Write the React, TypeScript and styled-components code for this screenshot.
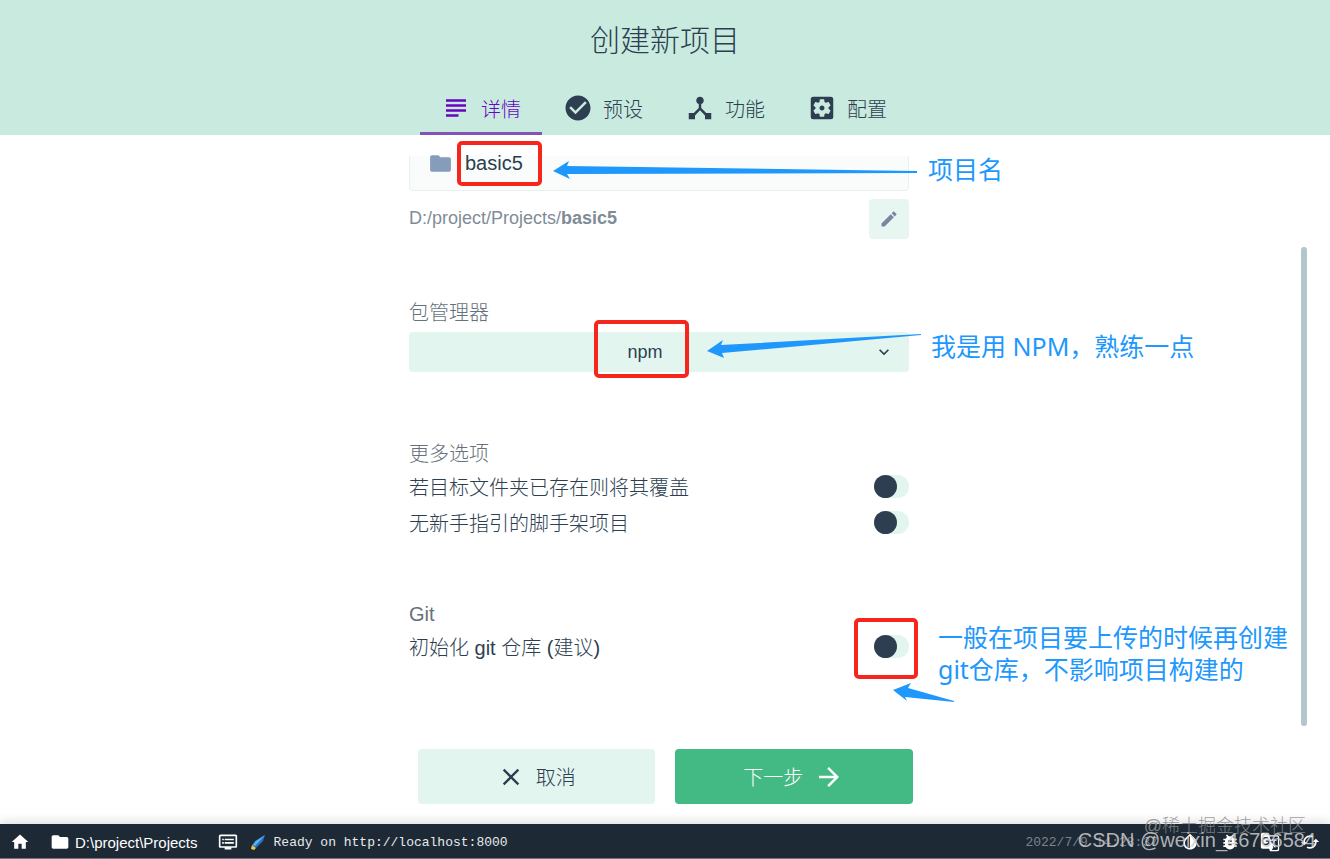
import React from 'react';
import styled, { createGlobalStyle, css } from 'styled-components';
import {
  MdSubject, MdCheckCircle, MdDeviceHub, MdSettingsApplications, MdFolder, MdEdit,
  MdKeyboardArrowDown, MdClose, MdArrowForward, MdHome, MdDvr, MdInvertColors,
  MdBugReport, MdGTranslate, MdCached,
} from 'react-icons/md';

const ink = '#2c3e50';
const blue = '#1e98fd';
const mint = '#e3f5ef';

const Global = createGlobalStyle`
  * { box-sizing: border-box; }
  body { margin: 0; background: #fff; color: ${ink}; }
  body, button, input, select {
    font-family: "Liberation Sans", "Noto Sans CJK SC", sans-serif;
    font-weight: 300;
  }
  button, input, select { color: inherit; border: 0; margin: 0; }
  svg { display: block; flex: none; }
`;

const Page = styled.div`
  min-height: 100vh;
  display: flex;
  flex-direction: column;
`;

const Header = styled.header`
  background: #c9ebdf;
  display: flex;
  flex-direction: column;
  align-items: center;
`;

const Title = styled.h1`
  margin: 0;
  padding-top: 21px;
  height: 81px;
  font-size: 30px;
  line-height: 40px;
  font-weight: 300;
`;

const Tabs = styled.nav`
  display: flex;
  margin-right: 2px;
`;

const Tab = styled.button<{ $active?: boolean }>`
  height: 54px;
  padding: 3px 21px 0;
  display: flex;
  align-items: center;
  gap: 10px;
  font-size: 20px;
  background: none;
  color: ${p => (p.$active ? '#6806c1' : ink)};
  border-bottom: 3px solid ${p => (p.$active ? '#8353b8' : 'transparent')};
`;

const Content = styled.main`
  flex: 1;
  position: relative;
  display: flex;
  flex-direction: column;
  align-items: center;
`;

const ScrollPane = styled.div`
  align-self: stretch;
  display: flex;
  justify-content: center;
  padding-right: 12px;
`;

const Form = styled.form`
  width: 500px;
  position: relative;
  display: flex;
  flex-direction: column;
`;

const NameField = styled.label`
  position: relative;
  height: 56px;
  padding: 0 19px;
  display: flex;
  align-items: center;
  gap: 12px;
  &::before {
    content: '';
    position: absolute;
    inset: 21px 0 0;
    background: #f9fcfb;
    border: 1px solid #e6f2ee;
    border-top: 0;
    border-radius: 0 0 4px 4px;
  }
  svg { position: relative; color: #869cbb; }
`;

const NameInput = styled.input`
  position: relative;
  flex: 1;
  min-width: 0;
  padding: 0;
  background: none;
  font-size: 20px;
  outline: none;
`;

const PathRow = styled.div`
  margin-top: 8px;
  display: flex;
  justify-content: space-between;
  color: #7f8c98;
  font-size: 18px;
  line-height: 38px;
  b { font-weight: 700; }
`;

const EditButton = styled.button`
  width: 40px;
  height: 40px;
  display: flex;
  align-items: center;
  justify-content: center;
  border-radius: 4px;
  background: #e8f6f1;
  color: #7886a0;
`;

const Section = styled.section<{ $gap: number }>`
  margin-top: ${p => p.$gap}px;
`;

const SectionTitle = styled.label`
  display: block;
  font-size: 20px;
  line-height: 28px;
  color: #66717b;
`;

const SelectBox = styled.div`
  margin-top: 5px;
  display: grid;
  align-items: center;
  height: 40px;
  border-radius: 4px;
  background: ${mint};
  > * { grid-area: 1 / 1; }
  svg { justify-self: end; margin-right: 15px; pointer-events: none; }
`;

const Select = styled.select`
  appearance: none;
  width: 100%;
  height: 40px;
  padding: 0 28px 0 0;
  background: none;
  font-size: 18px;
  text-align: center;
  text-align-last: center;
`;

const OptionRow = styled.label`
  display: flex;
  align-items: center;
  justify-content: space-between;
  height: 36px;
  font-size: 20px;
`;

const Switch = styled.input`
  appearance: none;
  margin: 0;
  width: 35px;
  height: 23px;
  border-radius: 12px;
  background: ${mint};
  &::before {
    content: '';
    display: block;
    width: 23px;
    height: 23px;
    border-radius: 50%;
    background: ${ink};
  }
`;

const Actions = styled.div`
  width: 495px;
  margin: auto 0 20px;
  display: flex;
  gap: 20px;
`;

const ActionButton = styled.button<{ $primary?: boolean }>`
  flex: 1;
  height: 55px;
  display: flex;
  align-items: center;
  justify-content: center;
  gap: 11px;
  border-radius: 4px;
  font-size: 20px;
  background: ${p => (p.$primary ? '#43b984' : mint)};
  color: ${p => (p.$primary ? '#fff' : ink)};
`;

const ScrollThumb = styled.div`
  position: absolute;
  right: 23px;
  top: 112px;
  bottom: 98px;
  width: 6px;
  border-radius: 3px;
  background: #b3c6cc;
`;

const Annotations = styled.div`
  position: absolute;
  inset: 0;
  pointer-events: none;
`;

const place = css<{ $x: number; $y: number }>`
  position: absolute;
  left: ${p => p.$x}px;
  top: ${p => p.$y}px;
`;

const Frame = styled.div<{ $x: number; $y: number; $w: number; $h: number }>`
  ${place}
  width: ${p => p.$w}px;
  height: ${p => p.$h}px;
  border: 4px solid #f5261b;
  border-radius: 5px;
`;

const Note = styled.p<{ $x: number; $y: number }>`
  ${place}
  margin: 0;
  color: ${blue};
  font-family: "Noto Sans", "Noto Sans CJK SC", sans-serif;
  font-size: 25px;
  font-weight: 400;
  line-height: 32px;
  white-space: nowrap;
`;

const Arrows = styled.svg`
  position: absolute;
  left: 0;
  top: 0;
  fill: ${blue};
  overflow: visible;
`;

const StatusBar = styled.footer`
  position: relative;
  height: 35px;
  padding-top: 2px;
  display: flex;
  align-items: center;
  background: #1d2935;
  border-bottom: 1px solid #77717f;
  box-shadow: 0 -2px 10px rgba(0, 0, 0, 0.14);
  color: #fff;
`;

const StatusItem = styled.button`
  height: 32px;
  padding: 0 10px;
  display: flex;
  align-items: center;
  gap: 5px;
  background: none;
  color: #fff;
  font-size: 15px;
`;

const LogEntry = styled.div`
  display: flex;
  align-items: center;
  gap: 8px;
  margin-left: 2px;
  font-family: "Liberation Mono", monospace;
  font-size: 13px;
  color: #e8eaec;
`;

const Stamp = styled.time`
  margin-left: auto;
  margin-right: 12px;
  font-family: "Liberation Mono", monospace;
  font-size: 13px;
  color: #7b838a;
`;

const Watermark = styled.span<{ $right: number; $top: number; $size: number; $color: string }>`
  position: absolute;
  right: ${p => p.$right}px;
  top: ${p => p.$top}px;
  font-size: ${p => p.$size}px;
  line-height: 24px;
  color: ${p => p.$color};
  white-space: nowrap;
  pointer-events: none;
`;

const Comet = () => (
  <svg width="16" height="18" viewBox="0 0 16 18">
    <path d="M15 2 L13 8 L6 15 L2 12 L5 8 Z" fill="#2872c4" />
    <path d="M15 2 L6 8 L3 12 L5 13 Z" fill="#62b4ee" />
    <path d="M2 12 L6 15 L4 17 L1 16 Z" fill="#e6cf48" />
  </svg>
);

const tabs = [
  { label: '详情', Icon: MdSubject },
  { label: '预设', Icon: MdCheckCircle },
  { label: '功能', Icon: MdDeviceHub },
  { label: '配置', Icon: MdSettingsApplications },
];

export default function App() {
  return (
    <Page>
      <Global />
      <Header>
        <Title>创建新项目</Title>
        <Tabs>
          {tabs.map(({ label, Icon }, i) => (
            <Tab key={label} $active={i === 0}>
              <Icon size={30} />
              {label}
            </Tab>
          ))}
        </Tabs>
      </Header>
      <Content>
        <ScrollPane>
          <Form onSubmit={e => e.preventDefault()}>
            <NameField>
              <MdFolder size={25} />
              <NameInput aria-label="项目名" defaultValue="basic5" />
            </NameField>
            <PathRow>
              <span>D:/project/Projects/<b>basic5</b></span>
              <EditButton type="button" aria-label="编辑"><MdEdit size={20} /></EditButton>
            </PathRow>
            <Section $gap={60}>
              <SectionTitle htmlFor="manager">包管理器</SectionTitle>
              <SelectBox>
                <Select id="manager" defaultValue="npm"><option>npm</option></Select>
                <MdKeyboardArrowDown size={20} />
              </SelectBox>
            </Section>
            <Section $gap={68}>
              <SectionTitle as="div">更多选项</SectionTitle>
              <OptionRow>若目标文件夹已存在则将其覆盖<Switch type="checkbox" /></OptionRow>
              <OptionRow>无新手指引的脚手架项目<Switch type="checkbox" /></OptionRow>
            </Section>
            <Section $gap={60}>
              <SectionTitle as="div">Git</SectionTitle>
              <OptionRow>初始化 git 仓库 (建议)<Switch type="checkbox" /></OptionRow>
            </Section>
            <Annotations>
              <Frame $x={48} $y={6} $w={85} $h={45} />
              <Frame $x={185} $y={185} $w={95} $h={58} />
              <Frame $x={445} $y={483} $w={64} $h={61} />
              <Arrows width="1" height="1">
                <path d="M144 36 L160 26 L158 31 L508 36 L508 38 L158 39 L161 44 Z" />
                <path d="M298 216 L314 205 L312 210 L512 199 L512 200 L313 218 L315 223 Z" />
                <path d="M484 555 L502 548 L499 553 L545 566 L545 567 L496 562 L498 566 Z" />
              </Arrows>
              <Note $x={519} $y={18}>项目名</Note>
              <Note $x={522} $y={195}>我是用 NPM，熟练一点</Note>
              <Note $x={529} $y={486}>一般在项目要上传的时候再创建<br />git仓库，不影响项目构建的</Note>
            </Annotations>
          </Form>
        </ScrollPane>
        <Actions>
          <ActionButton><MdClose size={28} />取消</ActionButton>
          <ActionButton $primary>下一步<MdArrowForward size={30} /></ActionButton>
        </Actions>
        <ScrollThumb />
      </Content>
      <StatusBar>
        <StatusItem aria-label="主页"><MdHome size={20} /></StatusItem>
        <StatusItem><MdFolder size={20} />D:\project\Projects</StatusItem>
        <StatusItem aria-label="日志"><MdDvr size={20} /></StatusItem>
        <LogEntry><Comet />Ready on http://localhost:8000</LogEntry>
        <Stamp>2022/7/9 14:28:37</Stamp>
        <StatusItem aria-label="主题"><MdInvertColors size={20} /></StatusItem>
        <StatusItem aria-label="报告问题"><MdBugReport size={20} /></StatusItem>
        <StatusItem aria-label="语言"><MdGTranslate size={20} /></StatusItem>
        <StatusItem aria-label="刷新"><MdCached size={20} /></StatusItem>
        <Watermark $right={24} $top={-10} $size={18} $color="rgba(140,140,140,0.85)">@稀土掘金技术社区</Watermark>
        <Watermark $right={14} $top={4} $size={20} $color="rgba(205,205,205,0.85)">CSDN @weixin_46766584</Watermark>
      </StatusBar>
    </Page>
  );
}
